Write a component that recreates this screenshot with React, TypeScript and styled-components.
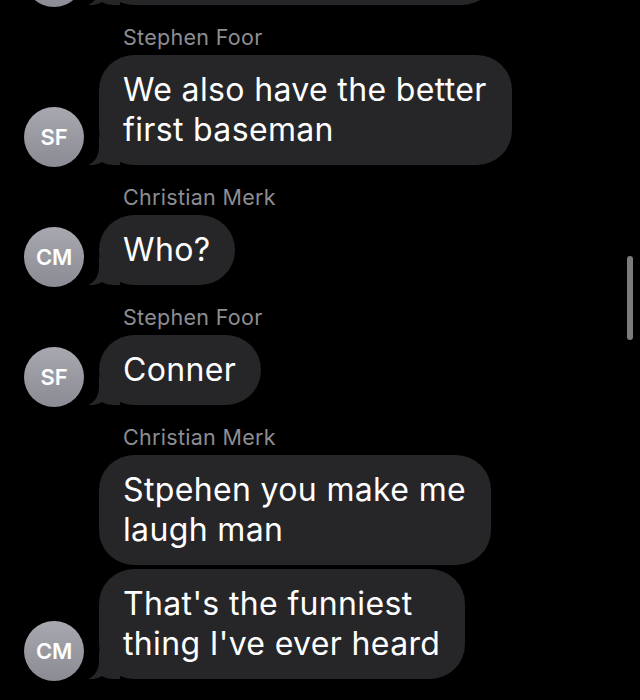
import React from "react";
import styled, { createGlobalStyle } from "styled-components";

const GlobalStyle = createGlobalStyle`
  html, body {
    margin: 0;
    padding: 0;
    background: #000;
  }
  body {
    font-family: Inter, "Noto Sans", "Liberation Sans", sans-serif;
    -webkit-font-smoothing: antialiased;
  }
`;

const Screen = styled.div`
  position: relative;
  width: 640px;
  height: 700px;
  overflow: hidden;
  background: #000;
`;

const Thread = styled.div`
  display: flex;
  flex-direction: column;
  align-items: flex-start;
  padding-left: 24px;
  margin-top: -105px;
`;

const SenderName = styled.div`
  margin: 19px 0 5px 99px;
  height: 26px;
  line-height: 26px;
  font-size: 21.5px;
  color: #8d8d92;
  letter-spacing: 0.3px;
`;

const Row = styled.div<{ $stacked?: boolean }>`
  display: flex;
  align-items: flex-end;
  gap: 15px;
  margin-top: ${(p) => (p.$stacked ? "4px" : "0")};
`;

const Avatar = styled.div<{ $hidden?: boolean }>`
  flex: none;
  width: 60px;
  height: 60px;
  margin-bottom: -2px;
  border-radius: 50%;
  background: linear-gradient(180deg, #a8a9b0 0%, #8a8b93 100%);
  display: flex;
  align-items: center;
  justify-content: center;
  color: #fff;
  font-size: 22px;
  font-weight: 600;
  letter-spacing: -0.2px;
  visibility: ${(p) => (p.$hidden ? "hidden" : "visible")};
`;

const Bubble = styled.div<{ $width?: number }>`
  position: relative;
  box-sizing: border-box;
  min-width: ${(p) => (p.$width ? `${p.$width}px` : "0")};
  padding: 15px 25px 15px 24px;
  border-radius: 35px;
  background: #262629;
  color: #fff;
  font-size: 32px;
  line-height: 40px;
  letter-spacing: 0.35px;
  white-space: nowrap;
`;

const Tail = styled.svg`
  position: absolute;
  left: -11px;
  bottom: 0;
  width: 32px;
  height: 28px;
`;

const ScrollThumb = styled.div`
  position: absolute;
  top: 256px;
  right: 7px;
  width: 6px;
  height: 84px;
  border-radius: 3px;
  background: #7c7c7e;
`;

type Message = { lines: string[]; width?: number };
type Group = { name?: string; initials: string; messages: Message[] };

const groups: Group[] = [
  { initials: "", messages: [{ lines: ["\u00a0", "\u00a0"], width: 398 }] },
  {
    name: "Stephen Foor",
    initials: "SF",
    messages: [{ lines: ["We also have the better", "first baseman"] }],
  },
  { name: "Christian Merk", initials: "CM", messages: [{ lines: ["Who?"] }] },
  { name: "Stephen Foor", initials: "SF", messages: [{ lines: ["Conner"] }] },
  {
    name: "Christian Merk",
    initials: "CM",
    messages: [
      { lines: ["Stpehen you make me", "laugh man"] },
      { lines: ["That's the funniest", "thing I've ever heard"] },
    ],
  },
];

const BubbleTail = () => (
  <Tail viewBox="0 0 32 28">
    <path
      d="M11 0 H32 V28 H26 C21 28 17 27 14 25 C10 27.5 5 28.3 0 28 C7 25 11 19 11 10 Z"
      fill="#262629"
    />
  </Tail>
);

const App = () => {
  return (
    <>
      <GlobalStyle />
      <Screen>
        <Thread>
          {groups.map((g, gi) => (
            <React.Fragment key={gi}>
              {g.name && <SenderName>{g.name}</SenderName>}
              {g.messages.map((m, mi) => {
                const last = mi === g.messages.length - 1;
                return (
                  <Row key={mi} $stacked={mi > 0}>
                    <Avatar $hidden={!last}>{g.initials}</Avatar>
                    <Bubble $width={m.width}>
                      {last && <BubbleTail />}
                      {m.lines.map((l, li) => (
                        <React.Fragment key={li}>
                          {li > 0 && <br />}
                          {l}
                        </React.Fragment>
                      ))}
                    </Bubble>
                  </Row>
                );
              })}
            </React.Fragment>
          ))}
        </Thread>
        <ScrollThumb />
      </Screen>
    </>
  );
};

export default App;
